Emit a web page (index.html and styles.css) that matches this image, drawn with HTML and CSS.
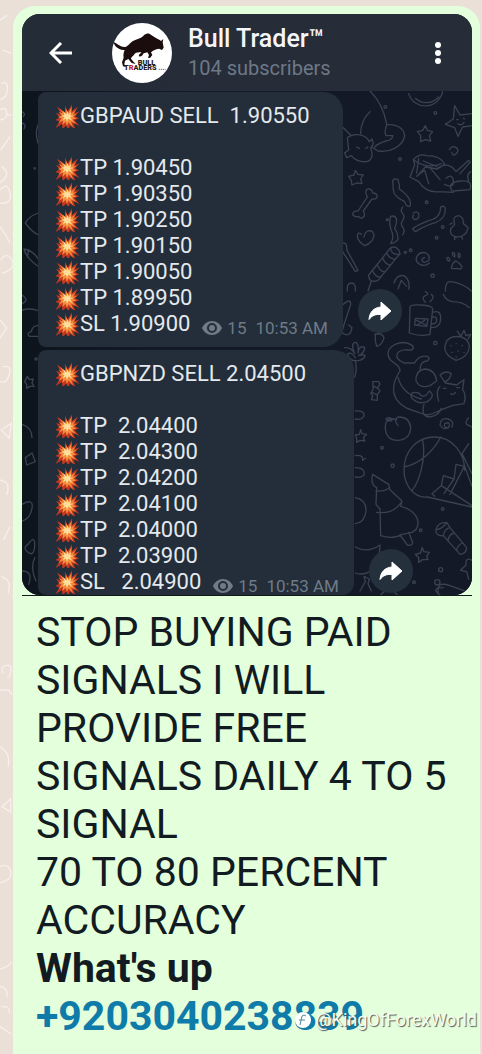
FILE: index.html
```html
<!DOCTYPE html>
<html lang="en">
<head>
<meta charset="UTF-8">
<meta name="viewport" content="width=device-width, initial-scale=1.0">
<title>Bull Trader</title>
<link rel="stylesheet" href="styles.css">
</head>
<body>
<svg class="symbols" aria-hidden="true">
    <symbol id="boom" viewBox="0 0 48 48">
        <path fill="#c4371f" d="M2 5l16 12 0-14 5 12 9-14 0 13 12-9-7 13 10-3-9 9 8 5-9 3 10 12-13-6 6 14-12-9-3 9-5-9-7 8-1-11-13 8 8-13-9-3 9-5-7-9 10 3z"/>
        <path fill="#f58a3c" d="M7 9l12 10 1-10 4 9 7-12-1 13 10-7-6 9 8-1-8 5 7 4-8 2 7 9-10-5 4 11-9-9-3 7-3-8-6 6 1-9-9 5 6-9-7-3 8-3-7-7 9 3z"/>
        <path fill="#ffdf9a" d="M14 14l7 7 2-7 2 7 6-6-3 8 8 1-8 2 5 8-8-5-3 7-2-7-7 4 4-7-7-2 7-2z"/>
    </symbol>
    <symbol id="eye" viewBox="0 0 20 14">
        <path fill="currentColor" fill-rule="evenodd" d="M10 0C5.500 0 1.700 2.900 0 7c1.700 4.100 5.500 7 10 7s8.300-2.900 10-7c-1.700-4.100-5.500-7-10-7zm0 12a5 5 0 1 1 0-10 5 5 0 0 1 0 10z"/>
        <circle cx="10" cy="7" r="3" fill="currentColor"/>
    </symbol>
    <symbol id="forward" viewBox="0 0 24 20">
        <path fill="#fff" stroke="#fff" stroke-width="1" stroke-linejoin="round" d="M13 1l10 9-10 9v-5.500C7.500 13 4 14.500 1 18.500 1.500 11.500 5.500 6.500 13 6z"/>
    </symbol>
</svg>

<svg class="wallpaper" viewBox="0 0 39 3162" aria-hidden="true">
    <path d="M0 60l22-14M4 250q20-10 18 18t-22 30M8 150l26 10M0 330q18-12 20 8t-20 22M20 345h14M30 410l-28 40M4 500q24 12 12 34l-16 14M0 570q22-26 30 8t-30 32M0 680q16 20 30 50M2 780q20-26 34 0t-30 40M0 960l20 24-20 30M8 1100q28-6 20 24t-28 20M4 1290l30-20-6 44zM0 1440q34 6 20 44M10 1620l20-40M4 1730q34 10 20 50M10 2020q-10-20 8-24t14 18-10 18M0 2070h26l10 14M0 2240q34 20 24 60M6 2420l26-24v40zM0 2600q26-12 32 14t-32 34M0 2908q30-10 34-22M0 2960q26 4 20 30M4 3020q26-4 24 20M0 3080l34 22"/>
</svg>

<main class="bubble">
    <figure class="photo">
        <div class="screen">
            <header class="topbar">
                <button class="icon-btn back" aria-label="Back">
                    <svg width="24" height="22" viewBox="0 0 24 22"><path d="M12 1L2 11l10 10M2 11h21" fill="none" stroke="#fff" stroke-width="3"/></svg>
                </button>
                <svg class="avatar" viewBox="0 0 180 180" aria-hidden="true">
                    <circle cx="90" cy="90" r="90" fill="#fff"/>
                    <path fill="#1b0d0d" d="M3 57c14 4 22 16 36 15 10-2 14-12 24-18 12-6 22-6 30-14 6-8 14-10 20-7l14 9c8 6 16 8 20 12l7-6-2 10 3 16-5 7-9-4-8 2-10 4-6 5 4 8-7 9-6-1 3-8-5-8-11 3-5 7-7 3-3-5 9-8c-8 0-16 0-21 4-3 7-10 8-11 15l8 10 6 6-12-3-10-12-10 5-2 11 5 8-9-2-3-12 5-14c-2-8 0-16 3-23-12 1-22-6-28-12z"/>
                    <text class="logo-text" x="77" y="126">BULL</text>
                    <text class="logo-text" x="36" y="142">T<tspan fill="#c62031">R</tspan>ADERS</text>
                    <path d="M140 139h21" stroke="#777" stroke-width="3" stroke-dasharray="4 2"/>
                </svg>
                <div class="channel">
                    <h1>Bull Trader™</h1>
                    <p>104 subscribers</p>
                </div>
                <button class="icon-btn" aria-label="More options">
                    <svg width="8" height="24" viewBox="0 0 8 24" fill="#fff"><circle cx="4" cy="4" r="3"/><circle cx="4" cy="12" r="3"/><circle cx="4" cy="20" r="3"/></svg>
                </button>
            </header>

            <section class="chat">
                <svg class="doodles doodles-left" viewBox="0 0 84 1512" aria-hidden="true">
                    <path d="M0 62q12 6 4 14M0 96q14 4 6 18M48 102q-10 24 0 54M48 366Q18 378 10 396q20 28 40 36M6 474q30 6 42 30M6 474q6 26 42 52M20 476l-4 22M0 612q24 16 0 26M0 658q20-8 46 0M48 704q-16-2-20 18-16 4-6 14h26M16 856l6 10 12-2-4 12 6 10-12 0-10 6 0-12-6-8zM0 1000q30 10 30 40M10 1100l20-14 10 26-26 10zM0 1240q36-20 30 12T0 1290M18 1360q-18 10 0 24t20-20-20-4M0 1440q34 0 20 40M38 1400q-14 30 4 70"/>
                    <circle cx="38" cy="232" r="2"/><circle cx="42" cy="804" r="3"/>
                </svg>
                <svg class="doodles doodles-right" viewBox="0 0 456 1512" aria-hidden="true">
                    <!-- cow, balloon, stars -->
                    <path d="M120 0q40 40 50 100 50 0 54 34c-4 34-50 52-80 46M92 128q0-40 28-66M170 102q-8 20-2 32l20 0q0 12-20 16-26 8-34 18M144 180l-16-10M40 110l24 24M52 140c20-16 56-10 66 12l8-8 4 14-8 14c8 20 4 36-12 40-26 2-40-10-46-18l-14 6-6-14 12-10z"/>
                    <path d="M80 168l8 4M108 172l6-4M236 8c16 50 88 50 102-6M256 22c20 18 50 18 70-4"/>
                    <path d="M286 104l6 14 16 4-10 12 4 16-16-4-14 6 0-18-10-12 16-4z"/>
                    <path d="M374 44l16 28 36-4M374 44l-4 40-24 16 28 10 10 26 14-28 28-4M380 86l4 0M400 82l4 2M384 98q10 8 18-4"/>
                    <path d="M358 176q8-14 20-6t0 18-12-4M76 238l8 12 16 2-8 12 4 14-16-2-14 6-2-14-8-12 16-4z"/>
                    <!-- hedgehog in a hat -->
                    <path d="M240 258l14-36-4-16q18-20 40-12 42 0 54 26l-22 14-36-6-20 22M250 206q40 30 84 12M266 202l-6 44M280 210l40 16M240 258l26 14q24 36 64 30M260 256l24-18 12 40M300 230l30 36M318 234q30-20 46-6M366 228l12 14 38-34 4 6-30 34M348 262q20-16 22 8t-26 10M366 300q-16-26 24-30t30 26l-50 4M416 270q-8-20 6-28M330 302l40 2"/>
                    <!-- streamers, bone, heart -->
                    <path d="M188 270q4-10 16-4 6 16 4 28c20 14 38 34 32 52-10 2-14-6-16-14-20-10-34-22-34-36zM332 348q10-6 14 4 2 30-28 42c-30 8-42 16-62 28l-8-8c14-14 42-22 62-30q22-8 22-36z"/>
                    <path d="M108 302q0-10 12-8 8 4 8 12 14 0 14 12-4 8-16 6l-26 36q8 12-2 20-8 4-12-4-14 4-18-6 2-12 16-10l28-42q-6-8-4-16zM94 430q-12-10-12 8 4 16 22 26 24-8 28-30-2-18-18-14-10 4-12 18"/>
                    <path d="M218 348q-8 10 0 20t0 20 0 20 0 24M182 376q12-4 18 8 0 16-6 28 10 14 10 34-8 10-22 12 12-20 2-40-8-20-2-42zM250 366q10-8 16 2 4 16-12 18-10-6-4-14"/>
                    <!-- duck, spiral, paw -->
                    <path d="M374 400q-8-24 10-26 18 2 16 24 14 10 14 14-6 26-34 26-22-4-18-24zM366 396l-6 4M374 438v8M394 436l4 8M298 516q-10 10-24 6-20-8-14-24 10-18 28-12 14 8 8 22-14 12-20 0 0-8 8-8"/>
                    <path d="M364 532q4-20 14-22 8 4 18 16-2 12-14 6-10 2-18 0zM350 502q6-8 10 6-6 6-10-6zM368 484q8 0 6 14-8-2-6-14zM386 486q8 4 2 14-6-4-2-14z"/>
                    <!-- cracker and stick -->
                    <path d="M116 552l66-82q22-8 28 18l-66 80q-28 10-28-16zM182 470q0 22 28 20M128 540q8 20 26 18M142 522q10 22 24 20M158 502q10 20 24 20M170 486q10 20 26 18M124 570l-10 30M40 456q12 0 10 20l34 62-8 4-38-60"/>
                    <path d="M192 576q8-26 30-22 20 14 14 40M204 594l10-26 16 18M52 600q-2-24 12-24t12 24M346 600q0-30 16-28 40 6 62 28"/>
                    <!-- mug, strawberry -->
                    <path d="M240 648q0-8 34-6t34 12l-8 76q-30 8-62-4zM308 664q24-8 24 16 0 32-30 30M308 678q12-2 12 8 0 14-14 12M256 682l38 2-4 22-36-4zM260 688l28 14M284 688l-22 14M286 634q-14-14 0-20t0-12M300 632q16-14 4-22M340 610q8 20 28 22 30 0 50 18"/>
                    <path d="M350 750q14-18 44-12 24 8 24 30-4 32-40 40-34-14-34-40zM382 720l10 16 10-18 6 16 14-4-8 14M362 764h1M378 758h1M396 764h1M366 784h1M384 780h1M402 784h1M378 798h1"/>
                    <!-- cat on its back -->
                    <path d="M248 764c-32-22-84 0-72 34 8 22 34 18 34 42-20 30-26 60-10 86 18 26 44 30 70 40 28 12 40 0 60-8l36-14 36-6q8-26-4-42l4-30-22 16-34-6-16-24q18-16 34-4-8 24-22 24M248 764q6 18-18 12-30 2-30 20 4 12 22 20l32 0q12-24 38-20 10 6 0 14-20 0-22 24M320 870q-4-34-36-36-28 4-26 36 12 24 42 14zM204 860q14 50 70 64M244 920q-4-22 22-14 16 22 32-6 20 14-6 32-30 10-48-12zM282 940q-10 34 14 38 30-2 38-26M326 930q-10-30 4-44M340 892h8M362 908q8 6 14-4M380 890h8"/>
                    <path d="M40 640q22-20 22 0l-26 80M34 724q26 20 32-14l-10-8M134 730q22-6 28 10-6 24-22 26-6-16-4-34zM44 770q20-2 30 18-14-34 4-34 10 8 6 32 4-26 20-16-2 18-18 24 24-6 18 4-12 14-28 10 6 28-2 50M76 800q-12-20-24-10 6 18 24 20M128 872l18 0 4 8-8 10 8 10-8 10 0 18-18-2 4-12-6-8 8-12zM128 884l16 8M126 904l16 8"/>
                    <!-- peach, ball -->
                    <path d="M200 986q-36-12-34 28 4 34 36 34 38-2 40-38-4-34-38-32-14 8 0 26M186 984q-12-8-18 0 8 8 18 4M356 1010q-16 2-12-12 18-8 14 8-16 16-28-4 2-24 24-18 20 6 12 24M76 960q28-2 26 14-4 14-26 10M92 1016l4 12 14 2-10 10 4 10-14-2-10 6v-12l-4-10 12-2z"/>
                    <path d="M426 1248l-134-30c-44 4-70-40-70-80 0-60 40-100 92-100 54 0 90 50 90 100M278 1048c12 60-14 130-32 150M222 1128c50-10 90-50 110-90M314 1216l-8-8 28-24 6-30 32 10 6-44 26 6 22 60M334 1184l92 60M372 1164l-30 44M404 1124l-44 86M416 1058l-20 30 30 60"/>
                    <!-- tree -->
                    <path d="M128 1150l48 30 4 16 36 34-4 16c40 10 64 40 46 70l-12 8-30 6q-26 16-64 4l-2-80-12-14 2-50q-20-10-12-40zM138 1200q26 2 40-10M140 1264q50 6 72-28M210 1332l22 30q14 4 16-8l-12-30M76 1094q24-4 22 14l8-6M76 1130q30 0 26 22-10 10-26 6M76 1220q34 6 32 42-6 34-32 36M76 1368q36 20 74-6-2 70-40 84-20 6-34 0"/>
                    <!-- torch and small stars -->
                    <path d="M318 1316q4-22 32-22l10 16 50 60q-2 20-20 20l-50-56q-24 2-22-18zM318 1316q20-2 32-22M340 1334q4-22 20-24M354 1350q2-20 18-24M380 1378q2-16 18-22M276 1370l6 12 16 2-8 12 4 10-16 0-12 8v-14l-10-10 16-4zM426 1408q-20-12-18 14l-16 16 18 4 6 22M90 1500l16-28-4-16 16 8-4 14 10 22M326 1512q-10-44 34-28l50 18M340 1490q-40 0-10 22M152 1512q26-30 50 0M416 980q-12 14-6 20l16 8"/>
                    <g><circle cx="316" cy="66" r="4"/><circle cx="166" cy="48" r="4"/><circle cx="210" cy="204" r="4"/><circle cx="290" cy="334" r="4"/><circle cx="320" cy="440" r="4"/><circle cx="338" cy="408" r="4"/><circle cx="172" cy="386" r="3"/><circle cx="242" cy="478" r="4"/><circle cx="226" cy="484" r="3"/><circle cx="308" cy="554" r="5"/><circle cx="316" cy="756" r="5"/><circle cx="156" cy="1070" r="4"/><circle cx="188" cy="1124" r="5"/><circle cx="338" cy="1254" r="4"/><circle cx="272" cy="1318" r="4"/><circle cx="332" cy="1436" r="6"/><circle cx="322" cy="1474" r="8"/><circle cx="252" cy="1474" r="4"/></g>
                </svg>

                <div class="row">
                    <article class="message">
                        <p><svg class="boom"><use href="#boom"/></svg>GBPAUD SELL&nbsp; 1.90550</p>
                        <p>&nbsp;</p>
                        <p><svg class="boom"><use href="#boom"/></svg>TP 1.90450</p>
                        <p><svg class="boom"><use href="#boom"/></svg>TP 1.90350</p>
                        <p><svg class="boom"><use href="#boom"/></svg>TP 1.90250</p>
                        <p><svg class="boom"><use href="#boom"/></svg>TP 1.90150</p>
                        <p><svg class="boom"><use href="#boom"/></svg>TP 1.90050</p>
                        <p><svg class="boom"><use href="#boom"/></svg>TP 1.89950</p>
                        <div class="last">
                            <p><svg class="boom"><use href="#boom"/></svg>SL 1.90900</p>
                            <span class="meta"><svg class="eye"><use href="#eye"/></svg><span>15</span><time>10:53 AM</time></span>
                        </div>
                    </article>
                    <button class="share" aria-label="Forward"><svg width="24" height="20"><use href="#forward"/></svg></button>
                </div>

                <div class="row">
                    <article class="message cut">
                        <p><svg class="boom"><use href="#boom"/></svg>GBPNZD SELL 2.04500</p>
                        <p>&nbsp;</p>
                        <p><svg class="boom"><use href="#boom"/></svg>TP&nbsp; 2.04400</p>
                        <p><svg class="boom"><use href="#boom"/></svg>TP&nbsp; 2.04300</p>
                        <p><svg class="boom"><use href="#boom"/></svg>TP&nbsp; 2.04200</p>
                        <p><svg class="boom"><use href="#boom"/></svg>TP&nbsp; 2.04100</p>
                        <p><svg class="boom"><use href="#boom"/></svg>TP&nbsp; 2.04000</p>
                        <p><svg class="boom"><use href="#boom"/></svg>TP&nbsp; 2.03900</p>
                        <div class="last">
                            <p><svg class="boom"><use href="#boom"/></svg>SL&nbsp;&nbsp; 2.04900</p>
                            <span class="meta"><svg class="eye"><use href="#eye"/></svg><span>15</span><time>10:53 AM</time></span>
                        </div>
                    </article>
                    <button class="share share-low" aria-label="Forward"><svg width="24" height="20"><use href="#forward"/></svg></button>
                </div>
            </section>
        </div>
    </figure>

    <div class="caption">
        <p>STOP BUYING PAID<br>SIGNALS I WILL<br>PROVIDE FREE<br>SIGNALS DAILY 4 TO 5<br>SIGNAL<br>70 TO 80 PERCENT<br>ACCURACY</p>
        <p><strong>What's up</strong></p>
        <p><a href="tel:+9203040238839">+9203040238839</a></p>
    </div>
</main>

<div class="watermark">
    <svg width="18" height="18" viewBox="0 0 18 18" aria-hidden="true"><circle cx="9" cy="9" r="8" fill="#fff"/><path d="M6 14l2-9q2-2 4 0M5 9h6" fill="none" stroke="#4d8ba6" stroke-width="1"/></svg>
    <span>@KingOfForexWorld</span>
</div>
</body>
</html>
```
FILE: styles.css
```css
* {
    box-sizing: border-box;
}
body {
    margin: 0;
    padding: 6px 2px 0 13px;
    min-height: 100vh;
    display: flex;
    position: relative;
    overflow: hidden;
    background-color: #eae0d8;
    font-family: Roboto, "Liberation Sans", sans-serif;
}
h1, p, figure {
    margin: 0;
}
button {
    border: none;
    padding: 0;
    background: none;
    cursor: pointer;
}
svg {
    display: block;
    flex: none;
}
.symbols {
    position: absolute;
    width: 0;
    height: 0;
}
.wallpaper {
    position: absolute;
    left: 0;
    top: 0;
    width: 13px;
    fill: none;
    stroke: #f6f0ea;
    stroke-width: 4;
}
.bubble {
    position: relative;
    flex: 1;
    min-width: 0;
    padding: 8px 8px 0 9px;
    background-color: #e4ffdb;
    border-radius: 22px 22px 0 0;
}

/* picture of the channel */
.photo {
    border-bottom: 1px solid #10181c;
}
.screen {
    border-radius: 18px;
    overflow: hidden;
    background-color: #131927;
}
.topbar {
    display: flex;
    align-items: center;
    height: 77px;
    padding: 0 30px 0 27px;
    background: linear-gradient(90deg, #232c37, #272c39 50%);
}
.icon-btn {
    display: flex;
}
.back {
    margin-right: 39px;
}
.avatar {
    width: 60px;
    height: 60px;
}
.logo-text {
    font-size: 22px;
    font-weight: 900;
    fill: #222;
}
.channel {
    flex: 1;
    margin-left: 16px;
}
.channel h1 {
    font-size: 25px;
    line-height: 30px;
    font-weight: 500;
    color: #f4f5f8;
}
.channel p {
    font-size: 20px;
    line-height: 28px;
    color: #6d7986;
}
.chat {
    position: relative;
    padding: 1px 0 0 16px;
    display: flex;
    flex-direction: column;
    gap: 3px;
    background: linear-gradient(90deg, #0d141c, #131927 30%);
}
.doodles {
    position: absolute;
    top: 0;
    fill: none;
    stroke: #3a4150;
    stroke-width: 4;
    stroke-linejoin: round;
    stroke-linecap: round;
}
.doodles-left {
    left: 0;
    width: 28px;
}
.doodles-right {
    right: -10px;
    width: 152px;
}
.row {
    position: relative;
    display: flex;
    align-items: flex-end;
    gap: 15px;
}
.message {
    padding: 11px 15px 10px 18px;
    border-radius: 8px 20px 20px 8px;
    background-color: #232e3a;
    color: #e4e9ee;
    font-size: 22px;
    line-height: 26px;
}
.message p {
    display: flex;
    align-items: center;
}
.cut {
    padding-bottom: 0;
    border-bottom-right-radius: 12px;
}
.boom {
    width: 24px;
    height: 24px;
}
.last {
    display: flex;
    gap: 12px;
}
.meta {
    display: flex;
    align-items: center;
    gap: 5px;
    padding-top: 8px;
    font-size: 17px;
    line-height: 18px;
    color: #6f7b87;
}
.meta time {
    margin-left: 4px;
}
.eye {
    width: 20px;
    height: 14px;
}
.share {
    display: flex;
    align-items: center;
    justify-content: center;
    width: 44px;
    height: 44px;
    margin-bottom: 14px;
    border-radius: 50%;
    background-color: #24303c;
}
.share-low {
    margin-bottom: 2px;
}

/* message text */
.caption {
    padding: 12px 0 14px 14px;
    font-size: 41px;
    line-height: 48px;
    color: #111b21;
}
.caption a {
    color: #0f7ba9;
    font-weight: 700;
    text-decoration: none;
}
.watermark {
    position: absolute;
    right: 5px;
    bottom: 24px;
    display: flex;
    align-items: center;
    gap: 3px;
    font-size: 18px;
    line-height: 20px;
    color: #f4fff0;
    text-shadow: 1px 1px 1px #555;
}
```
